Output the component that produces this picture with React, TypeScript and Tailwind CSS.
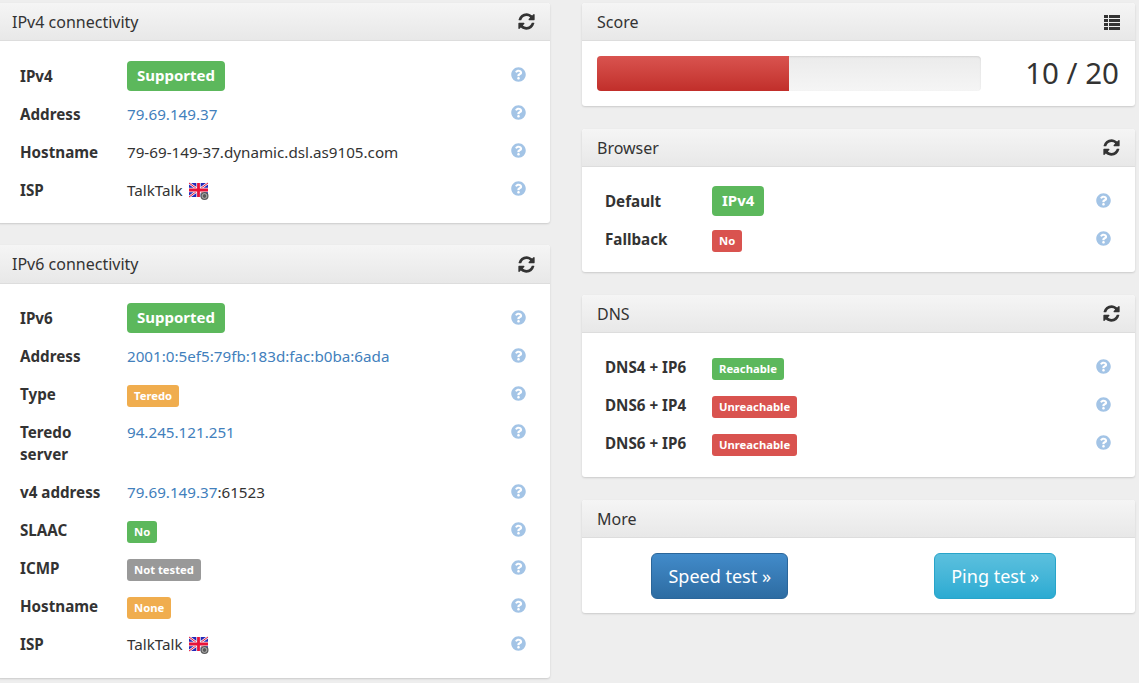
import type { ReactNode } from 'react'
import { FaQuestionCircle } from 'react-icons/fa'

type Tone = 'green' | 'red' | 'orange' | 'gray'

const toneClass: Record<Tone, string> = {
  green: 'bg-[#5cb85c]',
  red: 'bg-[#d9534f]',
  orange: 'bg-[#f0ad4e]',
  gray: 'bg-[#999999]',
}

function Flag() {
  return (
    <svg viewBox="0 0 20 18" className="ml-[6px] inline-block h-[18px] w-[20px] align-[-4px]">
      <rect x="0" y="1" width="19" height="14" fill="#2327b8" />
      <path d="M0 1 19 15M19 1 0 15" stroke="#f4f4f4" strokeWidth="2.4" />
      <path d="M0 1 19 15M19 1 0 15" stroke="#e8123a" strokeWidth="1" />
      <path d="M9.5 1v14M0 8h19" stroke="#f4f4f4" strokeWidth="4.4" />
      <path d="M9.5 1v14M0 8h19" stroke="#e8123a" strokeWidth="2.8" />
      <circle cx="15.5" cy="14" r="4" fill="#5a5a5a" />
      <circle cx="15.5" cy="14" r="2.4" fill="none" stroke="#c8c8c8" strokeWidth="0.8" />
    </svg>
  )
}

function Big({ tone, children }: { tone: Tone; children: ReactNode }) {
  return (
    <span className={`-my-1 block h-[30px] w-fit rounded-[4px] px-[10px] text-[15px] leading-[29px] font-bold text-white ${toneClass[tone]}`}>
      {children}
    </span>
  )
}

function Small({ tone, children }: { tone: Tone; children: ReactNode }) {
  return (
    <span className={`mt-[2px] -mb-[2px] block h-[22px] w-fit rounded-[3px] px-[7px] text-[11.25px] leading-[22px] font-bold text-white ${toneClass[tone]}`}>
      {children}
    </span>
  )
}

function Addr({ children }: { children: ReactNode }) {
  return <a className="text-[#4280bc]">{children}</a>
}

function Row({ label, high, children }: { label: string; high?: boolean; children: ReactNode }) {
  return (
    <div className="flex min-h-[38px] items-start py-2">
      <div className="w-[86px] text-[15.2px] leading-[22px] font-bold text-[#333]">{label}</div>
      <div className="ml-[21px] flex-1 text-[15.2px] leading-[22px] text-[#333]">{children}</div>
      <FaQuestionCircle className={`${high ? 'mt-[2px]' : 'mt-[3px]'} mr-[1px] text-[15px] text-[#a3c4e6]`} />
    </div>
  )
}

function Panel({ title, icon, children }: { title: string; icon?: ReactNode; children: ReactNode }) {
  return (
    <section className="overflow-hidden rounded-[3px] bg-white shadow-[0_1px_2px_rgba(0,0,0,0.15)]">
      <div className="flex h-[38px] items-center justify-between border-b border-[#dddddd] bg-gradient-to-b from-[#f5f5f5] to-[#e8e8e8] px-[15px] text-[16px] text-[#333]">
        <span>{title}</span>
        {icon}
      </div>
      {children}
    </section>
  )
}

function RefreshIcon() {
  return (
    <svg viewBox="0 0 1792 1792" className="-mr-[1px] h-[19px] w-[19px] fill-[#333]">
      <path d="M1639 1056q0 5-1 7-64 268-268 434.5t-478 166.5q-146 0-282.5-55t-243.5-157l-129 129q-19 19-45 19t-45-19-19-45v-448q0-26 19-45t45-19h448q26 0 45 19t19 45-19 45l-137 137q71 66 161 102t187 36q134 0 250-65t186-179q11-17 53-117 8-23 30-23h192q13 0 22.5 9.5t9.5 22.5zm25-800v448q0 26-19 45t-45 19h-448q-26 0-45-19t-19-45 19-45l138-138q-148-137-349-137-134 0-250 65t-186 179q-11 17-53 117-8 23-30 23h-199q-13 0-22.5-9.5t-9.5-22.5v-7q65-268 270-434.5t480-166.5q146 0 284 55.5t245 156.5l130-129q19-19 45-19t45 19 19 45z" />
    </svg>
  )
}

function ListIcon() {
  return (
    <svg viewBox="0 0 16 15" className="mt-[1px] h-[15px] w-[16px] fill-[#333]">
      <path d="M0 0h4v3H0zM5 0h11v3H5zM0 4h4v3H0zM5 4h11v3H5zM0 8h4v3H0zM5 8h11v3H5zM0 12h4v3H0zM5 12h11v3H5z" />
    </svg>
  )
}

export default function App() {
  return (
    <div className="h-[683px] w-[1139px] overflow-hidden bg-[#eeeeee] pt-[3px] font-['Noto_Sans',sans-serif]">
      <div className="ml-[-3px] flex items-start gap-[32px]">
        <div className="flex w-[553px] flex-col gap-[22px]">
          <Panel title="IPv4 connectivity" icon={<RefreshIcon />}>
            <div className="pt-[16px] pr-[23px] pb-[14px] pl-[23px]">
              <Row high label="IPv4"><Big tone="green">Supported</Big></Row>
              <Row high label="Address"><Addr>79.69.149.37</Addr></Row>
              <Row high label="Hostname">79-69-149-37.dynamic.dsl.as9105.com</Row>
              <Row high label="ISP">TalkTalk<Flag /></Row>
            </div>
          </Panel>
          <section className="overflow-hidden rounded-[3px] bg-white shadow-[0_1px_2px_rgba(0,0,0,0.15)]">
            <div className="flex h-[39px] items-center justify-between border-b border-[#dddddd] bg-gradient-to-b from-[#f5f5f5] to-[#e8e8e8] px-[15px] text-[16px] text-[#333]">
              <span>IPv6 connectivity</span>
              <RefreshIcon />
            </div>
            <div className="pt-[15px] pr-[23px] pb-[15px] pl-[23px]">
              <Row label="IPv6"><Big tone="green">Supported</Big></Row>
              <Row label="Address"><Addr>2001:0:5ef5:79fb:183d:fac:b0ba:6ada</Addr></Row>
              <Row label="Type"><Small tone="orange">Teredo</Small></Row>
              <Row label="Teredo server"><Addr>94.245.121.251</Addr></Row>
              <Row label="v4 address"><Addr>79.69.149.37</Addr>:61523</Row>
              <Row label="SLAAC"><Small tone="green">No</Small></Row>
              <Row label="ICMP"><Small tone="gray">Not tested</Small></Row>
              <Row label="Hostname"><Small tone="orange">None</Small></Row>
              <Row label="ISP">TalkTalk<Flag /></Row>
            </div>
          </section>
        </div>

        <div className="flex w-[553px] flex-col gap-[23px]">
          <Panel title="Score" icon={<ListIcon />}>
            <div className="flex h-[65px] items-start pt-[15px] pr-[16px] pl-[15px]">
              <div className="h-[35px] w-[384px] overflow-hidden rounded-[4px] bg-gradient-to-b from-[#ebebeb] to-[#f5f5f5] shadow-[inset_0_1px_2px_rgba(0,0,0,0.1)]">
                <div className="h-full w-1/2 bg-gradient-to-b from-[#d9534f] to-[#c12e2a]" />
              </div>
              <div className="ml-auto text-[29.5px] leading-[34px] text-[#333]">10 / 20</div>
            </div>
          </Panel>
          <Panel title="Browser" icon={<RefreshIcon />}>
            <div className="pt-[15px] pr-[23px] pb-[14px] pl-[23px]">
              <Row label="Default"><Big tone="green">IPv4</Big></Row>
              <Row label="Fallback"><Small tone="red">No</Small></Row>
            </div>
          </Panel>
          <Panel title="DNS" icon={<RefreshIcon />}>
            <div className="pt-[15px] pr-[23px] pb-[15px] pl-[23px]">
              <Row label="DNS4 + IP6"><Small tone="green">Reachable</Small></Row>
              <Row label="DNS6 + IP4"><Small tone="red">Unreachable</Small></Row>
              <Row label="DNS6 + IP6"><Small tone="red">Unreachable</Small></Row>
            </div>
          </Panel>
          <Panel title="More">
            <div className="grid grid-cols-2 pt-[15px] pr-[2px] pb-[14px]">
              <div className="flex justify-center">
                <button className="h-[46px] rounded-[6px] border border-[#2b669a] bg-gradient-to-b from-[#428bca] to-[#2d6ca2] px-[16px] text-[18px] text-white">
                  Speed test »
                </button>
              </div>
              <div className="flex justify-center">
                <button className="h-[46px] rounded-[6px] border border-[#28a4c9] bg-gradient-to-b from-[#5bc0de] to-[#2aabd2] px-[16px] text-[18px] text-white">
                  Ping test »
                </button>
              </div>
            </div>
          </Panel>
        </div>
      </div>
    </div>
  )
}
